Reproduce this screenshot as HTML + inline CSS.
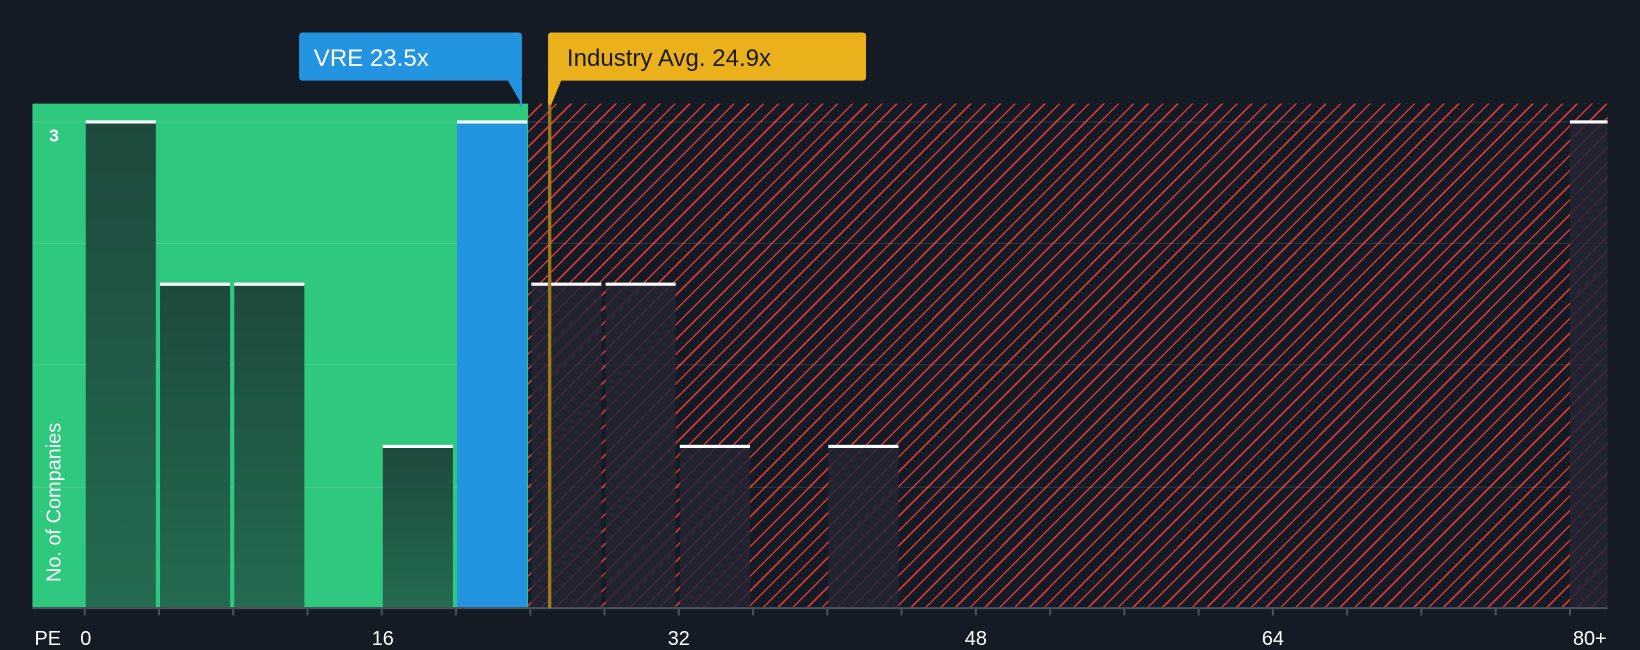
<!DOCTYPE html>
<html><head><meta charset="utf-8"><style>
html,body{margin:0;padding:0;background:#151b24;overflow:hidden}
#w{width:1568px;height:621px;position:relative;transform:scale(1.04592,1.04670);transform-origin:0 0;font-family:"Liberation Sans",sans-serif}
.a{position:absolute}
.hatch{background:repeating-linear-gradient(135deg,#151b24 0,#151b24 8.5px,#d23838 8.5px,#d23838 10px);}
.bar{position:absolute;width:67px;bottom:40px;border-top:3px solid #fff;box-sizing:border-box}
.g{background:linear-gradient(#1d4a3d,#246b50)}
.r{background:rgba(36,36,52,.85)}
.grid{position:absolute;left:31px;width:1506px;height:1px;background:rgba(255,255,255,.12)}
.tick{position:absolute;top:581px;width:2px;height:7px;background:#4a4f58}
.lbl{position:absolute;top:600px;color:#fff;font-size:19px;transform:translateX(-50%)}
</style></head><body><div id="w">
<div class="a" style="left:31px;top:99px;width:474px;height:482px;background:#2ec97f"></div>
<div class="a hatch" style="left:505px;top:99px;width:1032px;height:482px"></div>
<div class="grid" style="top:116px"></div><div class="grid" style="top:232px"></div><div class="grid" style="top:348px"></div><div class="grid" style="top:465px"></div>
<div class="bar g" style="left:82px;height:466px"></div>
<div class="bar g" style="left:153px;height:311px"></div>
<div class="bar g" style="left:224px;height:311px"></div>
<div class="bar g" style="left:366px;height:156px"></div>
<div class="bar" style="left:437px;height:466px;background:#2394e0"></div>
<div class="bar r" style="left:508px;height:311px"></div>
<div class="bar r" style="left:579px;height:311px"></div>
<div class="bar r" style="left:650px;height:156px"></div>
<div class="bar r" style="left:792px;height:156px"></div>
<div class="bar r" style="left:1501px;height:466px;width:36px"></div>
<div class="a" style="left:31px;top:580px;width:1506px;height:2px;background:#4a4f58"></div>
<div class="tick" style="left:80px"></div><div class="tick" style="left:151px"></div><div class="tick" style="left:222px"></div><div class="tick" style="left:293px"></div><div class="tick" style="left:364px"></div><div class="tick" style="left:435px"></div><div class="tick" style="left:506px"></div><div class="tick" style="left:577px"></div><div class="tick" style="left:648px"></div><div class="tick" style="left:719px"></div><div class="tick" style="left:790px"></div><div class="tick" style="left:861px"></div><div class="tick" style="left:932px"></div><div class="tick" style="left:1003px"></div><div class="tick" style="left:1074px"></div><div class="tick" style="left:1145px"></div><div class="tick" style="left:1216px"></div><div class="tick" style="left:1287px"></div><div class="tick" style="left:1358px"></div><div class="tick" style="left:1429px"></div><div class="tick" style="left:1500px"></div>
<div class="a" style="left:33px;top:600px;color:#fff;font-size:19px">PE</div>
<div class="lbl" style="left:82px">0</div><div class="lbl" style="left:366px">16</div><div class="lbl" style="left:649px">32</div><div class="lbl" style="left:933px">48</div><div class="lbl" style="left:1217px">64</div><div class="lbl" style="left:1520px">80+</div>
<div class="a" style="left:47px;top:120px;color:#fff;font-size:17px;font-weight:bold">3</div>
<div class="a" style="left:53px;top:480px;color:#fff;font-size:19px;transform:translate(-50%,-50%) rotate(-90deg);white-space:nowrap">No. of Companies</div>
<div class="a" style="left:524px;top:66px;width:3px;height:515px;background:#e8a817"></div>
<div class="a" style="left:524px;top:99px;width:3px;height:482px;background:#8a6a20;opacity:.8"></div>
<div class="a" style="left:524px;top:31px;width:304px;height:46px;background:#eab11c;border-radius:3px"></div>
<svg class="a" style="left:524px;top:76px" width="14" height="26"><path d="M0 0H13L3 24H0Z" fill="#eab11c"/></svg>
<div class="a" style="left:542px;top:42px;color:#1a1a1a;font-size:23px">Industry Avg. 24.9x</div>
<div class="a" style="left:286px;top:31px;width:213px;height:46px;background:#2394e0;border-radius:3px"></div>
<svg class="a" style="left:485px;top:76px" width="16" height="26"><path d="M0 0H14V24Z" fill="#2394e0"/><rect x="12" y="0" width="2" height="26" fill="#2394e0"/></svg>
<div class="a" style="left:300px;top:42px;color:#fff;font-size:23px">VRE 23.5x</div>
</div></body></html>
